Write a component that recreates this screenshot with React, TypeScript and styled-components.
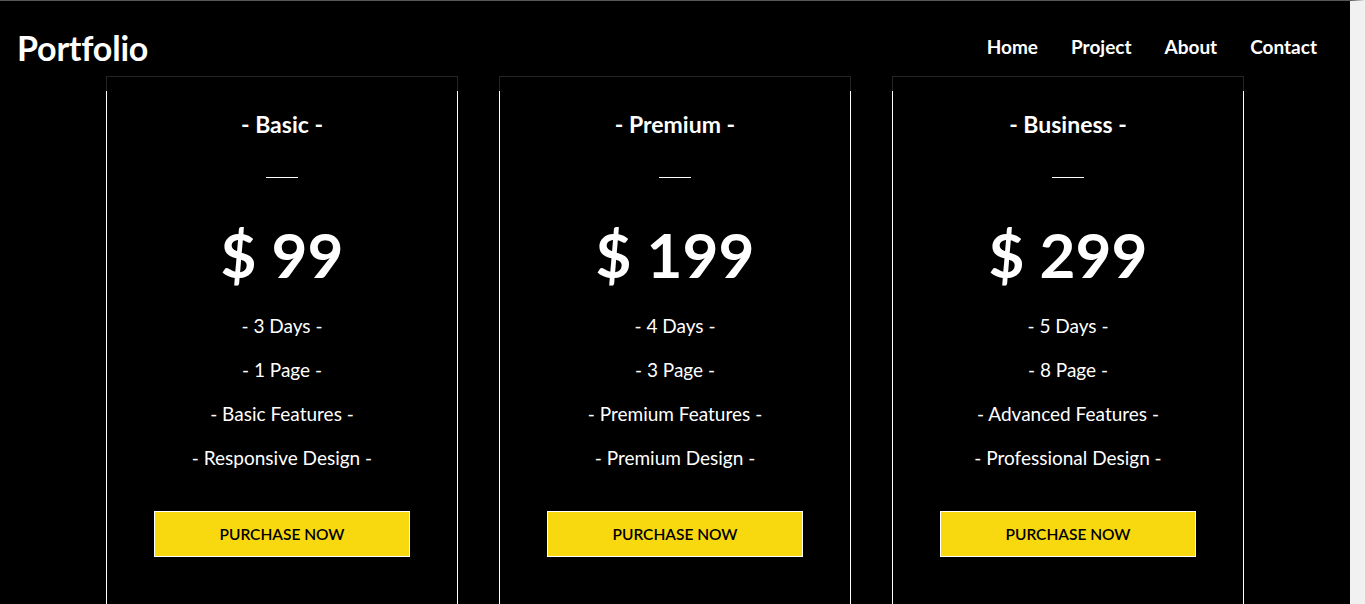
import * as React from "react";
import styled, { createGlobalStyle } from "styled-components";

type Plan = {
  name: string;
  price: number;
  features: string[];
};

const plans: Plan[] = [
  { name: "Basic", price: 99, features: ["3 Days", "1 Page", "Basic Features", "Responsive Design"] },
  { name: "Premium", price: 199, features: ["4 Days", "3 Page", "Premium Features", "Premium Design"] },
  { name: "Business", price: 299, features: ["5 Days", "8 Page", "Advanced Features", "Professional Design"] },
];

const links = ["Home", "Project", "About", "Contact"];

const GlobalStyle = createGlobalStyle`
  body {
    margin: 0;
    background: #000;
    color: #fff;
    font-family: "Lato", "Noto Sans", sans-serif;
  }
  * {
    box-sizing: border-box;
  }
`;

export default function App() {
  return (
    <>
      <GlobalStyle />
      <Page>
        <Header>
          <Logo>Portfolio</Logo>
          <Nav>
            {links.map((l) => (
              <NavLink key={l} href="#">{l}</NavLink>
            ))}
          </Nav>
        </Header>
        <Pricing>
          {plans.map((p) => (
            <Card key={p.name}>
              <PlanName>- {p.name} -</PlanName>
              <Divider />
              <Price>$ {p.price}</Price>
              <Features>
                {p.features.map((f) => (
                  <Feature key={f}>- {f} -</Feature>
                ))}
              </Features>
              <PurchaseButton>PURCHASE NOW</PurchaseButton>
            </Card>
          ))}
        </Pricing>
      </Page>
    </>
  );
}

// styled components
// right border stands in for the browser's scrollbar gutter
const Page = styled.div`
  height: 100vh;
  overflow: hidden;
  border-top: 1px solid #575757;
  border-right: 15px solid #f1f1f1;
`;

const Header = styled.header`
  position: sticky;
  top: 0;
  z-index: 10;
  height: 90px;
  margin-bottom: -15px;
  display: flex;
  align-items: center;
  justify-content: space-between;
  padding: 0 33px 0 17px;
  background: rgba(0, 0, 0, 0.86);
`;

const Logo = styled.div`
  font-size: 34px;
  font-weight: 700;
  letter-spacing: -0.2px;
  margin-top: 2px;
`;

const Nav = styled.nav`
  display: flex;
  gap: 33px;
`;

const NavLink = styled.a`
  color: #fff;
  text-decoration: none;
  font-size: 19px;
  font-weight: 700;
`;

const Pricing = styled.section`
  display: grid;
  grid-template-columns: repeat(3, 352px);
  justify-content: center;
  gap: 41px;
  height: calc(100vh - 76px);
  overflow: hidden;
`;

const Card = styled.div`
  display: flex;
  flex-direction: column;
  align-items: center;
  min-height: 600px;
  padding-top: 34px;
  border: 1px solid #fff;
  text-align: center;
`;

const PlanName = styled.h3`
  margin: 0;
  font-size: 23px;
  line-height: 26px;
  font-weight: 700;
`;

const Divider = styled.div`
  width: 32px;
  height: 1px;
  margin-top: 40px;
  background: #fff;
`;

const Price = styled.div`
  margin-top: 40px;
  font-size: 62px;
  line-height: 72px;
  font-weight: 700;
`;

const Features = styled.ul`
  list-style: none;
  margin: 14px 0 0;
  padding: 0;
`;

const Feature = styled.li`
  font-size: 19px;
  line-height: 44px;
`;

const PurchaseButton = styled.button`
  margin-top: 31px;
  width: 256px;
  height: 46px;
  border: 1px solid #fff;
  background: #f8d90f;
  color: #000;
  font-family: inherit;
  font-size: 15.5px;
  font-weight: 600;
  cursor: pointer;
`;
